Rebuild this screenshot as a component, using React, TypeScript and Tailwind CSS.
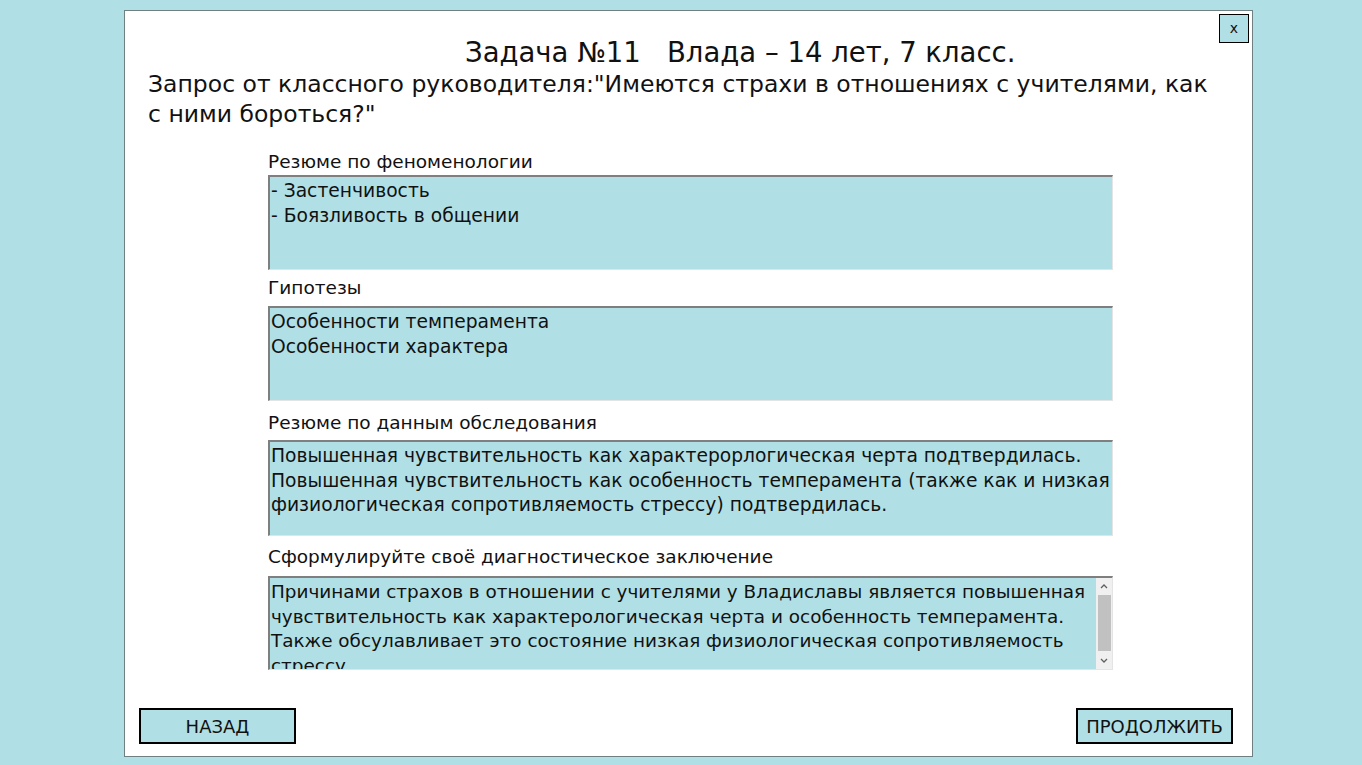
import React from "react";

const font = { fontFamily: '"DejaVu Sans", Verdana, sans-serif' };

function Box({ lines, h }: { lines: string[]; h: string }) {
  return (
    <div className={`w-[845px] ${h} bg-[#b0dfe5] border-t-2 border-l-2 border-[#7f7f7f] border-r border-b border-r-[#e4e4e4] border-b-[#e4e4e4] px-[1px] pt-[2px] text-[18.7px] leading-[24.5px] text-[#111] overflow-hidden whitespace-nowrap`}>
      {lines.map((l, i) => (
        <div key={i}>{l}</div>
      ))}
    </div>
  );
}

export default function App() {
  return (
    <div className="w-full h-[765px] bg-[#b0dfe5] pt-[10px] pl-[124px]" style={font}>
      <div className="relative w-[1129px] h-[747px] bg-white border border-[#6e8080] flex flex-col">
        <button className="absolute right-[3px] top-[3px] w-[30px] h-[29px] bg-[#b0dfe5] border border-black text-[14px] flex items-center justify-center text-[#111]">
          x
        </button>
        <div className="pl-[340px] pt-[25px] text-[27.5px] leading-[32px] text-[#111] whitespace-pre">
          {"Задача №11   Влада – 14 лет, 7 класс."}
        </div>
        <div className="pl-[23px] text-[23.5px] leading-[30px] text-[#111] mt-[1px] whitespace-nowrap">
          Запрос от классного руководителя:"Имеются страхи в отношениях с учителями, как
          <br />с ними бороться?"
        </div>
        <div className="pl-[143px] flex flex-col text-[#111]">
          <div className="text-[18.5px] leading-[26px] mt-[20px]">Резюме по феноменологии</div>
          <div className="mt-[0px]">
            <Box h="h-[95px]" lines={["- Застенчивость", "- Боязливость в общении"]} />
          </div>
          <div className="text-[18.5px] leading-[26px] mt-[5px]">Гипотезы</div>
          <div className="mt-[5px]">
            <Box h="h-[95px]" lines={["Особенности темперамента", "Особенности характера"]} />
          </div>
          <div className="text-[18.5px] leading-[26px] mt-[9px]">Резюме по данным обследования</div>
          <div className="mt-[4px]">
            <Box
              h="h-[96px]"
              lines={[
                "Повышенная чувствительность как характерорлогическая черта подтвердилась.",
                "Повышенная чувствительность как особенность темперамента (также как и низкая",
                "физиологическая сопротивляемость стрессу) подтвердилась.",
              ]}
            />
          </div>
          <div className="text-[18.5px] leading-[26px] mt-[8px]">Сформулируйте своё диагностическое заключение</div>
          <div className="mt-[6px] w-[845px] h-[94px] bg-[#b0dfe5] border-t-2 border-l-2 border-[#7f7f7f] border-r border-b border-r-[#e4e4e4] border-b-[#e4e4e4] flex overflow-hidden">
            <div className="flex-1 px-[1px] pt-[2px] text-[18.4px] leading-[24.5px] text-[#111] overflow-hidden whitespace-nowrap">
              <div>Причинами страхов в отношении с учителями у Владиславы является повышенная</div>
              <div>чувствительность как характерологическая черта и особенность темперамента.</div>
              <div>Также обсулавливает это состояние низкая физиологическая сопротивляемость</div>
              <div>стрессу.</div>
            </div>
            <div className="w-[16px] bg-[#f0f0f0] flex flex-col items-center">
              <div className="h-[17px] flex items-center justify-center">
                <svg width="8" height="5" viewBox="0 0 8 5"><path d="M1 4 L4 1 L7 4" fill="none" stroke="#606060" strokeWidth="1.3" /></svg>
              </div>
              <div className="w-[13px] h-[56px] bg-[#c1c1c1]" />
              <div className="flex-1" />
              <div className="h-[17px] flex items-center justify-center">
                <svg width="8" height="5" viewBox="0 0 8 5"><path d="M1 1 L4 4 L7 1" fill="none" stroke="#606060" strokeWidth="1.3" /></svg>
              </div>
            </div>
          </div>
        </div>
        <div className="flex-1" />
        <div className="flex justify-between pl-[14px] pr-[19px] pb-[12px]">
          <button className="w-[157px] h-[36px] bg-[#b0dfe5] border-2 border-black text-[18px] text-[#111]">НАЗАД</button>
          <button className="w-[157px] h-[36px] bg-[#b0dfe5] border-2 border-black text-[18px] text-[#111]">ПРОДОЛЖИТЬ</button>
        </div>
      </div>
    </div>
  );
}
